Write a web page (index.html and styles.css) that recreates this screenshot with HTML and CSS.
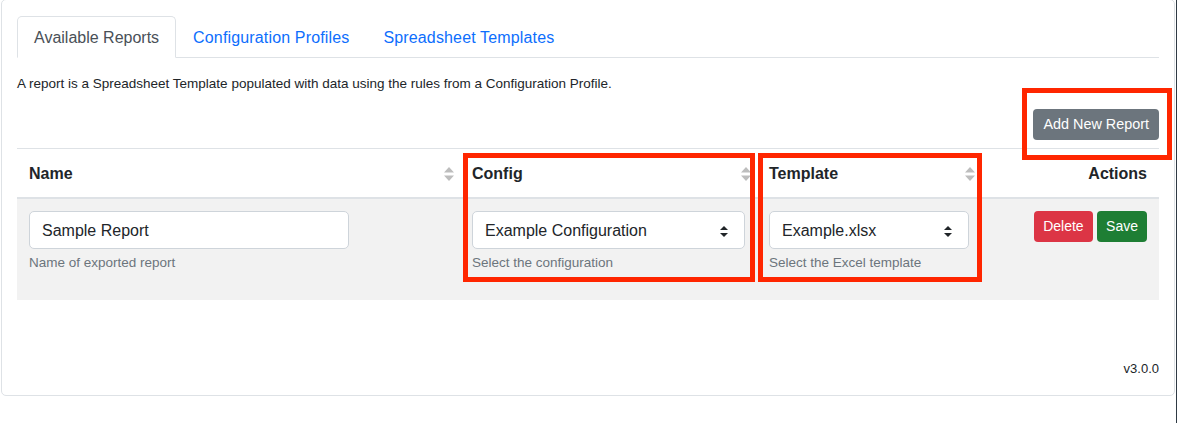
FILE: index.html
```html
<!DOCTYPE html>
<html lang="en">
<head>
    <meta charset="UTF-8">
    <meta name="viewport" content="width=device-width, initial-scale=1.0">
    <title>Reports</title>
    <link rel="stylesheet" href="styles.css">
</head>
<body>

    <div class="window">
        <div class="card">
            <ul class="tabs">
                <li><a class="tab active" href="#">Available Reports</a></li>
                <li><a class="tab" href="#">Configuration Profiles</a></li>
                <li><a class="tab" href="#">Spreadsheet Templates</a></li>
            </ul>

            <div class="tab-pane">
                <p class="intro">A report is a Spreadsheet Template populated with data using the rules from a Configuration Profile.</p>

                <div class="toolbar">
                    <button class="btn btn-sm btn-secondary">Add New Report</button>
                </div>

                <table class="reports">
                    <colgroup>
                        <col class="col-name">
                        <col class="col-config">
                        <col class="col-template">
                        <col class="col-actions">
                    </colgroup>
                    <thead>
                        <tr>
                            <th class="sortable"><span>Name</span>
                                <svg class="sort" width="10" height="14" viewBox="0 0 10 14"><path d="M5 0 L10 5.5 H0 Z M0 8.5 H10 L5 14 Z" fill="#bdbdbd"/></svg>
                            </th>
                            <th class="sortable"><span>Config</span>
                                <svg class="sort" width="10" height="14" viewBox="0 0 10 14"><path d="M5 0 L10 5.5 H0 Z M0 8.5 H10 L5 14 Z" fill="#bdbdbd"/></svg>
                            </th>
                            <th class="sortable"><span>Template</span>
                                <svg class="sort" width="10" height="14" viewBox="0 0 10 14"><path d="M5 0 L10 5.5 H0 Z M0 8.5 H10 L5 14 Z" fill="#bdbdbd"/></svg>
                            </th>
                            <th class="actions-head">Actions</th>
                        </tr>
                    </thead>
                    <tbody>
                        <tr>
                            <td>
                                <div class="field">
                                    <input class="form-control name-input" type="text" value="Sample Report">
                                    <div class="help">Name of exported report</div>
                                </div>
                            </td>
                            <td>
                                <div class="field">
                                    <div class="form-select">
                                        <span>Example Configuration</span>
                                        <svg width="8" height="11" viewBox="0 0 8 11"><path d="M4 0 L8 4 H0 Z M0 7 H8 L4 11 Z" fill="#212529"/></svg>
                                    </div>
                                    <div class="help">Select the configuration</div>
                                </div>
                            </td>
                            <td>
                                <div class="field">
                                    <div class="form-select">
                                        <span>Example.xlsx</span>
                                        <svg width="8" height="11" viewBox="0 0 8 11"><path d="M4 0 L8 4 H0 Z M0 7 H8 L4 11 Z" fill="#212529"/></svg>
                                    </div>
                                    <div class="help">Select the Excel template</div>
                                </div>
                            </td>
                            <td class="actions">
                                <button class="btn btn-sm btn-danger">Delete</button>
                                <button class="btn btn-sm btn-success">Save</button>
                            </td>
                        </tr>
                    </tbody>
                </table>

                <div class="version">v3.0.0</div>
            </div>
        </div>

        <!-- annotation boxes from the screenshot -->
        <div class="mark mark-add"></div>
        <div class="mark mark-config"></div>
        <div class="mark mark-template"></div>
    </div>

</body>
</html>
```

FILE: styles.css
```css
* {
    box-sizing: border-box;
}

html, body {
    margin: 0;
    padding: 0;
    background-color: #fff;
}

body {
    font-family: "Liberation Sans", Arial, sans-serif;
    font-size: 16px;
    line-height: 1.5;
    color: #212529;
}

.window {
    position: relative;
    display: flow-root;
    height: 423px;
    padding: 0 1px;
    border-right: 1px solid #2f3a44;
}

.card {
    margin-top: -1px;
    padding: 16px 15px 17px;
    border: 1px solid #dee2e6;
    border-radius: 5px;
    background-color: #fff;
}

/* Tabs */
.tabs {
    display: flex;
    list-style: none;
    margin: 0;
    padding: 0;
    border-bottom: 1px solid #dee2e6;
}

.tab {
    display: block;
    margin-bottom: -1px;
    padding: 9px 16px 7px;
    border: 1px solid transparent;
    border-radius: 5px 5px 0 0;
    color: #0d6efd;
    text-decoration: none;
    letter-spacing: 0.15px;
}

.tab.active {
    color: #495057;
    background-color: #fff;
    border-color: #dee2e6 #dee2e6 #fff;
    letter-spacing: 0;
}

.intro {
    margin: 17px 0 0;
    font-size: 13.5px;
    line-height: 18px;
}

.toolbar {
    display: flex;
    justify-content: flex-end;
    margin: 16px 0 8px;
}

/* Buttons */
.btn {
    font-family: inherit;
    border: 1px solid transparent;
    color: #fff;
    cursor: pointer;
}

.btn-sm {
    padding: 4px 8px;
    font-size: 14px;
    line-height: 21px;
    border-radius: 4px;
}

.btn-secondary {
    padding: 4px 9px;
    font-size: 14.4px;
    background-color: #6c757d;
}

.btn-danger {
    background-color: #dc3545;
}

.btn-success {
    background-color: #1e7e34;
}

/* Table */
.reports {
    width: 100%;
    table-layout: fixed;
    border-collapse: collapse;
}

.col-name { width: 443px; }
.col-config { width: 297px; }
.col-template { width: 224px; }
.col-actions { width: 178px; }

.reports th {
    padding: 13px 12px 11px;
    border-top: 1px solid #dee2e6;
    border-bottom: 2px solid #dee2e6;
    text-align: left;
    font-weight: bold;
    line-height: 24px;
}

.reports th.sortable {
    padding-right: 6px;
}

.reports th.sortable span {
    float: left;
}

.sort {
    float: right;
    margin-top: 5px;
}

.reports th.actions-head {
    text-align: right;
}

.reports tbody tr {
    background-color: #f2f2f2;
}

.reports td {
    padding: 12px;
    vertical-align: top;
}

.field {
    margin-bottom: 16px;
}

.form-control {
    display: block;
    height: 38px;
    padding: 7px 12px 5px;
    font-family: inherit;
    font-size: 16px;
    line-height: 24px;
    color: #212529;
    background-color: #fff;
    border: 1px solid #ced4da;
    border-radius: 5px;
}

.name-input {
    width: 320px;
}

.form-select {
    display: flex;
    align-items: center;
    justify-content: space-between;
    height: 38px;
    padding: 7px 16px 5px 12px;
    background-color: #fff;
    border: 1px solid #ced4da;
    border-radius: 5px;
}

.help {
    margin-top: 4px;
    font-size: 13.5px;
    line-height: 19px;
    color: #6c757d;
}

.actions {
    text-align: right;
}

.version {
    margin-top: 60px;
    text-align: right;
    font-size: 13px;
    line-height: 18px;
}

/* Red annotation boxes */
.mark {
    position: absolute;
    border: 5px solid #ff2600;
}

.mark-add {
    left: 1022px;
    top: 88px;
    width: 150px;
    height: 72px;
}

.mark-config {
    left: 463px;
    top: 153px;
    width: 292px;
    height: 129px;
}

.mark-template {
    left: 758px;
    top: 153px;
    width: 224px;
    height: 129px;
}
```
